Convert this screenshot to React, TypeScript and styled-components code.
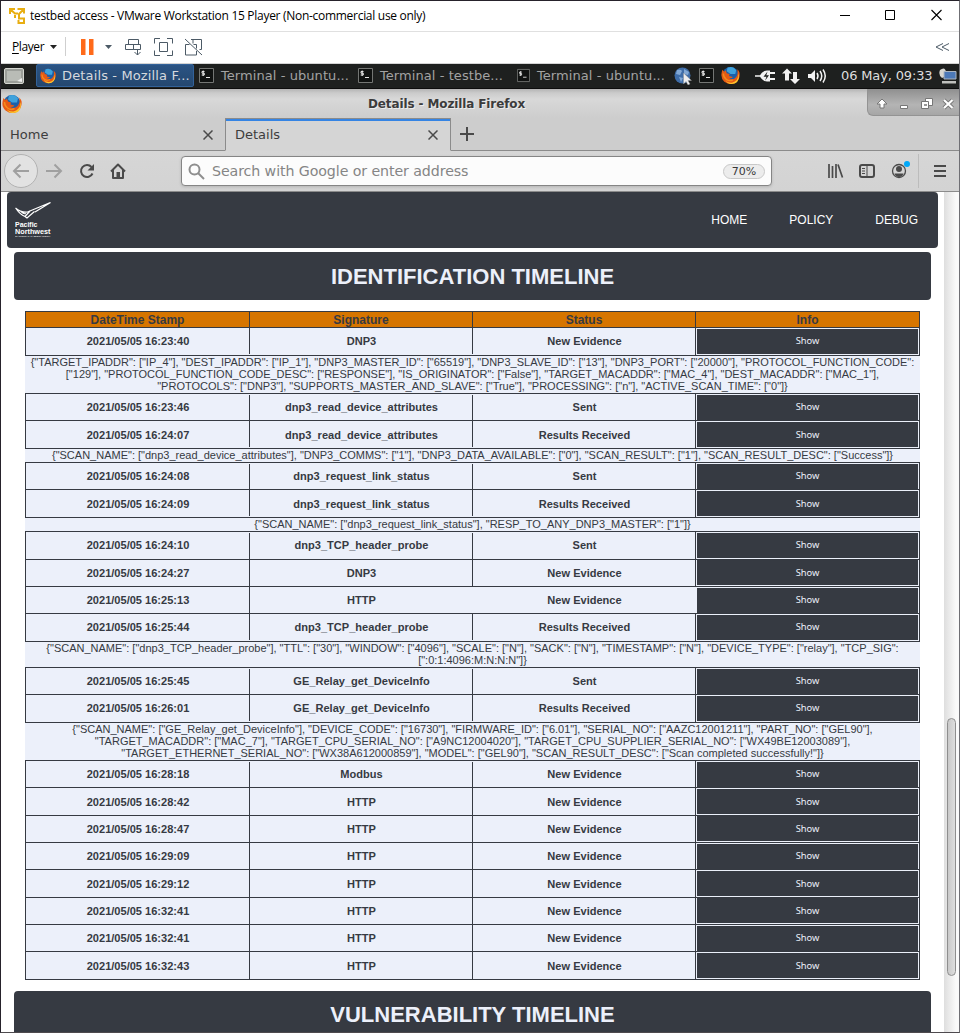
import React from 'react';
import styled, { createGlobalStyle, css } from 'styled-components';

const DARK = '#363a42';
const PALE = '#ecf0fa';

const Global = createGlobalStyle`
  * { box-sizing: border-box; }
  body { margin: 0; background: #fff; overflow: hidden; }
`;

const Frame = styled.div`
  width: 960px;
  height: 1033px;
  display: flex;
  flex-direction: column;
  overflow: hidden;
  border: 1px solid #26222b;
  border-right-color: #6f6f74;
  border-bottom-color: #4e4a4e;
  background: #fff;
`;

const HostTitle = styled.div`
  height: 30px;
  flex: none;
  display: flex;
  align-items: center;
  padding-left: 8px;
  gap: 5px;
  font: 12px/30px 'Open Sans', 'Noto Sans', sans-serif;
  color: #000;
`;
const HostTitleText = styled.span`
  flex: 1;
  white-space: nowrap;
  letter-spacing: -0.29px;
`;
const HostControls = styled.div`
  display: flex;
  margin-right: 15px;
  padding-bottom: 2px;
`;

const HostTools = styled.div`
  height: 33px;
  flex: none;
  display: flex;
  align-items: center;
  border-top: 1px solid #e0e0e0;
  border-bottom: 1px solid #d4d4d4;
  padding: 0 0 2px 11px;
  font: 12px 'Open Sans', 'Noto Sans', sans-serif;
  letter-spacing: -0.4px;
`;
const Mnemonic = styled.span`
  text-decoration: underline;
  text-underline-offset: 2px;
`;
const PlayerLabel = styled.span`
  width: 38px;
  white-space: nowrap;
`;
const Rule = styled.span`
  width: 1px;
  height: 19px;
  margin: 0 15px 0 8px;
  background: #cfcfcf;
`;
const Stretch = styled.span`
  flex: 1;
`;

const Panel = styled.div`
  height: 25px;
  flex: none;
  display: flex;
  align-items: center;
  background: #1e201f;
  border-bottom: 1px solid #0d0d0d;
  font: 13px 'DejaVu Sans', sans-serif;
  color: #a3a3a3;
  padding: 0 0 1px 3px;
`;
const Task = styled.div<{ $active?: boolean; $width: number }>`
  width: ${(p) => p.$width}px;
  height: 23px;
  flex: none;
  display: flex;
  align-items: center;
  gap: 7px;
  padding-left: 4px;
  white-space: nowrap;
  letter-spacing: 0.07px;
  ${(p) =>
    p.$active &&
    css`
      gap: 6px;
      padding-left: 3px;
      background: linear-gradient(#2b5484, #24476f);
      border: 1px solid #336299;
      border-radius: 2px;
      color: #d6d9de;
      letter-spacing: 0.14px;
    `}
`;
const Tray = styled.div`
  display: flex;
  align-items: center;
  flex: 1;
  gap: 7px;
  padding-left: 9px;
`;
const StatusGroup = styled.span`
  display: flex;
  margin-left: 8px;
`;
const Clock = styled.span`
  color: #dedede;
  margin-left: 5px;
  white-space: nowrap;
  letter-spacing: -0.14px;
`;

const FoxTitle = styled.div`
  height: 29px;
  flex: none;
  display: flex;
  background: linear-gradient(#b4b4b4 0, #cbcbcb 4px, #d8d8d8 10px, #cdcdcd 100%);
  font: bold 12px/31px 'DejaVu Sans', sans-serif;
  color: #3c3c3c;
`;
const FoxIconSlot = styled.div`
  width: 22px;
  padding: 5px 0 0 1px;
  line-height: 0;
`;
const FoxTitleText = styled.div`
  flex: 1;
  text-align: center;
  padding-left: 3px;
  letter-spacing: -0.12px;
  text-shadow: 1px 1px 0 #eee;
`;
const FoxControls = styled.div`
  width: 92px;
  height: 27px;
  background: linear-gradient(#8f8f8f, #b4b4b4 60%, #a6a6a6);
  border: 1px solid #939393;
  border-width: 0 0 1px 1px;
  border-bottom-left-radius: 6px;
`;

const Tabs = styled.div`
  height: 33px;
  flex: none;
  display: flex;
  background: #cdcdcd;
  font: 13px 'DejaVu Sans', sans-serif;
  color: #3d3d3d;
`;
const Tab = styled.div<{ $active?: boolean }>`
  width: ${(p) => (p.$active ? 226 : 224)}px;
  display: flex;
  align-items: center;
  justify-content: space-between;
  padding: 1px 12px 0 9px;
  border-bottom: 1px solid #8b8b8b;
  ${(p) =>
    p.$active &&
    css`
      background: linear-gradient(#3584e4 2px, #d5d5d5 2px);
      border: 1px solid #8b8b8b;
      border-bottom-color: #d5d5d5;
      padding-top: 0;
    `}
`;
const TabRest = styled.div`
  flex: 1;
  border-bottom: 1px solid #8b8b8b;
  padding: 9px 0 0 9px;
`;

const Nav = styled.div`
  height: 41px;
  flex: none;
  display: flex;
  align-items: center;
  background: linear-gradient(#d6d6d6, #d3d3d3);
  border-bottom: 1px solid #8b8b8b;
`;
const NavLeft = styled.div`
  width: 180px;
  line-height: 0;
`;
const UrlBar = styled.div`
  width: 591px;
  height: 30px;
  display: flex;
  align-items: center;
  border: 1px solid #858585;
  border-radius: 4px;
  background: #fcfcfc;
  box-shadow: 0 1px 3px rgba(0, 0, 0, 0.15);
  padding: 0 6px;
  font: 14.2px 'DejaVu Sans', sans-serif;
  color: #858585;
`;
const Placeholder = styled.span`
  flex: 1;
  padding: 0 0 1px 7px;
  letter-spacing: -0.09px;
`;
const ZoomBadge = styled.span`
  width: 42px;
  height: 15px;
  border: 1px solid #c8c8c8;
  border-radius: 8px;
  background: #ececec;
  color: #383838;
  font: 11px/13px 'DejaVu Sans', sans-serif;
  text-align: center;
`;

const View = styled.div`
  flex: 1;
  min-height: 0;
  display: flex;
  overflow: hidden;
  background: #fff;
`;
const Page = styled.div`
  width: 943px;
  font-family: 'Liberation Sans', Arial, sans-serif;
  color: ${DARK};
`;
const SiteHeader = styled.header`
  height: 56px;
  margin: 0 6px;
  display: flex;
  align-items: center;
  background: ${DARK};
  border-radius: 4px;
  color: #fff;
  padding: 0 20px 0 8px;
  font-size: 12px;
`;
const SiteLinks = styled.nav`
  flex: 1;
  display: flex;
  justify-content: flex-end;
  gap: 42px;
`;
const Banner = styled.h2<{ $line?: number }>`
  height: 48px;
  margin: 4px 13px 0;
  background: ${DARK};
  border-radius: 4px;
  color: #ecf0fa;
  font-size: 22px;
  line-height: ${(p) => p.$line ?? 49}px;
  text-align: center;
`;

const Table = styled.div`
  width: 895px;
  margin: 11px 0 11px 24px;
  border-bottom: 1px solid ${DARK};
`;
const COLUMNS = '224px 223px 223px 225px';
const HeadRow = styled.div`
  display: grid;
  grid-template-columns: ${COLUMNS};
  height: 16px;
  border-top: 1px solid ${DARK};
  background: #d67500;
  font: bold 12px/17px 'Liberation Sans', Arial, sans-serif;
  text-align: center;
`;
const HeadCell = styled.div`
  border-left: 1px solid ${DARK};
  &:last-child { border-right: 1px solid ${DARK}; }
`;
const Row = styled.div<{ $height: number }>`
  display: grid;
  grid-template-columns: ${COLUMNS};
  grid-template-rows: ${(p) => p.$height - 1}px;
  height: ${(p) => p.$height}px;
  border-top: 1px solid ${DARK};
  background: ${PALE};
  font-weight: bold;
  font-size: 11.05px;
  text-align: center;
`;
const Cell = styled.div<{ $open?: boolean; $from?: number; $to?: number; $low?: boolean }>`
  border-left: 1px solid ${(p) => (p.$open ? PALE : DARK)};
  margin: ${(p) => p.$from ?? 0}px 0 ${(p) => p.$to ?? 0}px;
  padding-left: 1px;
  line-height: ${(p) => (p.$low ? 29 : 27) - 2 * (p.$from ?? 0)}px;
`;
const InfoCell = styled.div<{ $open?: boolean; $flush?: boolean }>`
  border: 1px solid ${DARK};
  border-width: 0 1px;
  border-left-color: ${(p) => (p.$open ? PALE : DARK)};
  padding: ${(p) => (p.$flush ? 0 : 1)}px 1px 0;
`;
const ShowButton = styled.button<{ $low?: boolean }>`
  display: block;
  width: 100%;
  height: 25px;
  border: 0;
  padding: ${(p) => (p.$low ? '1px 0 0' : '0 0 1px')};
  background: ${DARK};
  color: #ecf0fa;
  font: 9.33px/22px 'Noto Sans', sans-serif;
`;
const Detail = styled.div`
  border-top: 1px solid ${DARK};
  background: ${PALE};
  padding-bottom: 1px;
  font-size: 11.01px;
  line-height: 12px;
  text-align: center;
  white-space: pre;
`;

const ScrollTrack = styled.div`
  width: 15px;
  background: linear-gradient(90deg, #dedede, #fafafa 80%);
  padding: 526px 0 0 3px;
`;
const ScrollThumb = styled.div`
  width: 9px;
  height: 258px;
  border: 1px solid #8e8e8e;
  border-radius: 5px;
  background: linear-gradient(90deg, #c9c9c9, #dedede);
`;

type Entry = {
  time: string;
  signature: string;
  status: string;
  height: number;
  low?: boolean;
  flush?: boolean;
  merged?: boolean;
  detail?: string[];
};

const entries: Entry[] = [
  { time: '2021/05/05 16:23:40', signature: 'DNP3', status: 'New Evidence', height: 28, detail: [
    '{"TARGET_IPADDR": ["IP_4"], "DEST_IPADDR": ["IP_1"], "DNP3_MASTER_ID": ["65519"], "DNP3_SLAVE_ID": ["13"], "DNP3_PORT": ["20000"], "PROTOCOL_FUNCTION_CODE":',
    '["129"], "PROTOCOL_FUNCTION_CODE_DESC": ["RESPONSE"], "IS_ORIGINATOR": ["False"], "TARGET_MACADDR": ["MAC_4"], "DEST_MACADDR": ["MAC_1"],',
    '"PROTOCOLS": ["DNP3"], "SUPPORTS_MASTER_AND_SLAVE": ["True"], "PROCESSING": ["n"], "ACTIVE_SCAN_TIME": ["0"]}',
  ] },
  { time: '2021/05/05 16:23:46', signature: 'dnp3_read_device_attributes', status: 'Sent', height: 27 },
  { time: '2021/05/05 16:24:07', signature: 'dnp3_read_device_attributes', status: 'Results Received', height: 28, low: true, detail: [
    '{"SCAN_NAME": ["dnp3_read_device_attributes"], "DNP3_COMMS": ["1"], "DNP3_DATA_AVAILABLE": ["0"], "SCAN_RESULT": ["1"], "SCAN_RESULT_DESC": ["Success"]}',
  ] },
  { time: '2021/05/05 16:24:08', signature: 'dnp3_request_link_status', status: 'Sent', height: 27 },
  { time: '2021/05/05 16:24:09', signature: 'dnp3_request_link_status', status: 'Results Received', height: 28, low: true, detail: [
    '{"SCAN_NAME": ["dnp3_request_link_status"], "RESP_TO_ANY_DNP3_MASTER": ["1"]}',
  ] },
  { time: '2021/05/05 16:24:10', signature: 'dnp3_TCP_header_probe', status: 'Sent', height: 28 },
  { time: '2021/05/05 16:24:27', signature: 'DNP3', status: 'New Evidence', height: 27, flush: true },
  { time: '2021/05/05 16:25:13', signature: 'HTTP', status: 'New Evidence', height: 27, merged: true },
  { time: '2021/05/05 16:25:44', signature: 'dnp3_TCP_header_probe', status: 'Results Received', height: 28, detail: [
    '{"SCAN_NAME": ["dnp3_TCP_header_probe"], "TTL": ["30"], "WINDOW": ["4096"], "SCALE": ["N"], "SACK": ["N"], "TIMESTAMP": ["N"], "DEVICE_TYPE": ["relay"], "TCP_SIG":',
    '[":0:1:4096:M:N:N:N"]}',
  ] },
  { time: '2021/05/05 16:25:45', signature: 'GE_Relay_get_DeviceInfo', status: 'Sent', height: 27 },
  { time: '2021/05/05 16:26:01', signature: 'GE_Relay_get_DeviceInfo', status: 'Results Received', height: 28, detail: [
    '{"SCAN_NAME": ["GE_Relay_get_DeviceInfo"], "DEVICE_CODE": ["16730"], "FIRMWARE_ID": ["6.01"], "SERIAL_NO": ["AAZC12001211"], "PART_NO": ["GEL90"],',
    '"TARGET_MACADDR": ["MAC_7"], "TARGET_CPU_SERIAL_NO": ["A9NC12004020"], "TARGET_CPU_SUPPLIER_SERIAL_NO": ["WX49BE12003089"],',
    '"TARGET_ETHERNET_SERIAL_NO": ["WX38A612000859"], "MODEL": ["GEL90"], "SCAN_RESULT_DESC": ["Scan completed successfully!"]}',
  ] },
  { time: '2021/05/05 16:28:18', signature: 'Modbus', status: 'New Evidence', height: 27 },
  { time: '2021/05/05 16:28:42', signature: 'HTTP', status: 'New Evidence', height: 28, low: true },
  { time: '2021/05/05 16:28:47', signature: 'HTTP', status: 'New Evidence', height: 27, flush: true },
  { time: '2021/05/05 16:29:09', signature: 'HTTP', status: 'New Evidence', height: 27 },
  { time: '2021/05/05 16:29:12', signature: 'HTTP', status: 'New Evidence', height: 28, low: true },
  { time: '2021/05/05 16:32:41', signature: 'HTTP', status: 'New Evidence', height: 27, flush: true },
  { time: '2021/05/05 16:32:41', signature: 'HTTP', status: 'New Evidence', height: 27 },
  { time: '2021/05/05 16:32:43', signature: 'HTTP', status: 'New Evidence', height: 28, low: true },
];

const VmLogo = () => (
  <svg width="16" height="16" viewBox="0 0 16 16" fill="none" stroke="#e8ae12" strokeWidth="2">
    <path d="M1 6V1h5M1.500 1.500L6.500 6M5 5.500h4M8.500 1H15v4.500M14.500 1.500L10 6M10 5.500v5h5v4.500H9.500V12M6 7v3" />
  </svg>
);

const HostWindowIcons = () => (
  <svg width="104" height="12" viewBox="0 0 104 12" fill="none" stroke="#000" strokeWidth="1">
    <path d="M0 6.500h10" />
    <path d="M45.500 1.500h9v9h-9z" />
    <path d="M91.500 1l10 10M101.500 1l-10 10" strokeWidth="1.100" />
  </svg>
);

const HostToolIcons = () => (
  <svg width="136" height="24" viewBox="0 0 136 24" fill="none" stroke="#4c5a66" strokeWidth="1">
    <path d="M0 4h4.500v16H0zM8 4h4.500v16H8z" fill="#ff6a1a" stroke="none" />
    <path d="M24 10h7l-3.500 4z" fill="#4c5a66" stroke="none" />
    <path d="M47.500 4.500h10v5h-10zM44.500 9.500h8v5h-8zM52.500 9.500h7v5h-7zM56.500 14v6M53.500 17l3 3 3-3" />
    <path d="M73.500 8.500V3.500H79M86 3.500h5.500V8.500M91.500 15.500v5H86M79 20.500h-5.500V15.500M78.500 7.500h8v9h-8z" />
    <path d="M104 4l17 16M110 4.500h10.500V14.500h-2M112 4.500v4M104.500 9.500v10.500h11v-4M104.500 9.500h4M112.500 9.500h3v4" />
  </svg>
);

const DesktopIcon = () => (
  <svg width="20" height="16" viewBox="0 0 20 16">
    <rect x=".5" y=".5" width="19" height="15" rx="1.500" fill="#9b9e99" stroke="#d4d6d0" />
    <path d="M3 3h14v8l-4 2H3z" fill="#b9bcb6" />
    <path d="M13 13l5-3v4z" fill="#eee" />
  </svg>
);

const Firefox = ({ size }: { size: number }) => (
  <svg width={size} height={size} viewBox="0 0 20 20">
    <circle cx="10" cy="9.500" r="8.500" fill="#1c5fa8" />
    <path d="M7 1.500q6-2 9 3l-1 4-5 0-4-3z" fill="#3fa2dc" />
    <path d="M1.500 4q-3 8 2 12.500 6 4.500 12 1 5-4 4-10.500Q19 5 17 3.500q1.500 5-1 8-3 4-7.500 1.500 3 .2 4-1.500L8.500 10.500l.5-2-3-1L5 4.500 3.500 6z" fill="#e65a14" />
    <path d="M18.500 8q0 8-7 9.500-5 .5-7-3 2 4.500 6.500 4.500 8 0 8-9z" fill="#fdc52c" />
    <path d="M2.500 8q0 4 3 6 3.500 2.500 7 .5" fill="none" stroke="#f58b1d" strokeWidth="1.500" />
  </svg>
);

const TerminalIcon = () => (
  <svg width="15" height="15" viewBox="0 0 15 15">
    <path d="M.5.5h14v14H.5z" fill="#101211" stroke="#747674" />
    <path d="M5.500 3.500H3v1.700h2.300V7H2.700M4.200 2.500V8M7 9.500h4" fill="none" stroke="#e4e4e4" />
  </svg>
);

const GlobeIcon = () => (
  <svg width="18" height="18" viewBox="0 0 18 18">
    <circle cx="8.500" cy="8.500" r="8" fill="#3f6da8" />
    <path d="M3 3q4-1 5 1l-2 4-4-1zM10 2l5 3-1 3-4-1zM5 10l4 1-2 4z" fill="#82a8d4" />
    <path d="M9.500 6v11l2.500-2.500 2 3.500 2-1-2-3.500h3.500z" fill="#eee" stroke="#888" strokeWidth=".4" />
  </svg>
);

const StatusIcons = () => (
  <svg width="74" height="18" viewBox="0 0 74 18" fill="#f2f2f2">
    <path d="M0 8.200h5Q8 3.500 12 3.500h3v11h-3q-4 0-7-4.700H0zM15 5h5v2h-5zM15 11h5v2h-5z" />
    <path d="M12.500 4.500l-4 5.200h3l-1.500 4 4-5.400h-2.700z" fill="#1e201f" />
    <path d="M32 1.500L27 6.500h3v7h4V6.500h3zM40 17l5-5h-3V5h-4v7h-3z" />
    <path d="M53 7h3l4-4v12l-4-4h-3z" />
    <path d="M62 6q2 3 0 6M65 4q3.500 5 0 10M68 2.500q4.500 6.500 0 13" fill="none" stroke="#f2f2f2" strokeWidth="1.500" />
  </svg>
);

const NetworkIcon = () => (
  <svg width="18" height="18" viewBox="0 0 18 18">
    <path d="M1 3q5-4 6 2 0 5-4 6-4-3-2-8z" fill="#d7d7d2" />
    <path d="M5 4.500h12v7.500H5z" fill="#4c79b8" stroke="#aab4c0" />
    <path d="M3 14h14v2.500H3z" fill="#bfc0bd" />
  </svg>
);

const FoxWindowIcons = () => (
  <svg width="90" height="26" viewBox="0 0 90 26" fill="#fff" stroke="#777" strokeWidth="1">
    <path d="M14 10l5 5h-3v4h-4v-4H9z" />
    <path d="M32.500 16.500h7v3h-7z" />
    <path d="M57.500 9.500h7v7h-7z" />
    <path d="M53.500 12.500h7v7h-7z" />
    <path d="M56 15h3v2h-3z" fill="#999" stroke="none" />
    <path d="M76 11l8.500 8M84.500 11L76 19" stroke="#777" strokeWidth="4" />
    <path d="M76 11l8.500 8M84.500 11L76 19" stroke="#fff" strokeWidth="2.200" />
  </svg>
);

const CloseIcon = () => (
  <svg width="10" height="10" viewBox="0 0 10 10" stroke="#4a4a4a" strokeWidth="1.500">
    <path d="M.5.5l9 9M9.500.5l-9 9" />
  </svg>
);

const PlusIcon = () => (
  <svg width="14" height="14" viewBox="0 0 14 14" stroke="#4a4a4a" strokeWidth="2">
    <path d="M7 0v14M0 7h14" />
  </svg>
);

const NavIcons = () => (
  <svg width="140" height="36" viewBox="0 0 140 36" fill="none" strokeWidth="2">
    <circle cx="20" cy="18" r="16.500" fill="#e2e2e2" stroke="#b2b2b2" strokeWidth="1" />
    <path d="M28 18H13M19.500 11.500L13 18l6.500 6.500" stroke="#a0a0a0" />
    <path d="M45 18h15M53.500 11.500L60 18l-6.500 6.500" stroke="#a0a0a0" />
    <path d="M90.500 14a6 6 0 1 0 1 6.500" stroke="#4a4a4a" />
    <path d="M93 11v6.500h-6.500z" fill="#4a4a4a" />
    <path d="M110 18.500l7-7 7 7M112 17v8h10v-8" stroke="#4a4a4a" strokeLinejoin="round" />
    <path d="M115.500 19h3.500v6h-3.500z" fill="#4a4a4a" />
  </svg>
);

const SearchIcon = () => (
  <svg width="17" height="17" viewBox="0 0 17 17" fill="none" stroke="#8e8e8e" strokeWidth="2">
    <circle cx="6.500" cy="6.500" r="5" />
    <path d="M10 10l6 6" />
  </svg>
);

const ToolIcons = () => (
  <svg width="124" height="36" viewBox="0 0 124 36" fill="none" stroke="#4a4a4a" strokeWidth="2">
    <path d="M2 11v14M5.500 13v12M9 11v14M11 11.500l4.500 13" strokeWidth="1.700" />
    <rect x="33" y="12" width="14" height="12" rx="2" />
    <path d="M40 12v12M35 15.500h3M35 18h3M35 20.500h3" strokeWidth="1" />
    <circle cx="72" cy="18" r="6.500" strokeWidth="1.300" />
    <circle cx="72" cy="16" r="3" fill="#4a4a4a" stroke="none" />
    <path d="M67.500 20.500h9q-1 3.500-4.500 3.500t-4.500-3.500z" fill="#4a4a4a" stroke="none" />
    <circle cx="80" cy="11" r="3" fill="#00a8f8" stroke="none" />
    <path d="M91.500 1v34" stroke="#bcbcbc" strokeWidth="1" />
    <path d="M107 13h12M107 18h12M107 23h12" />
  </svg>
);

const LogoBox = styled.div`
  width: 38px;
  line-height: 0;
`;
const LabLogo = () => (
  <svg width="37" height="37" viewBox="0 0 37 37">
    <path d="M.5 6q5 4.500 12 4L35.500.5 20 10M1 6.500q4 6 9 8L12 16l7.500-6.500M6 9.500q3 3 5 2M10 14.500l5-5.500" fill="none" stroke="#fff" strokeWidth="1.200" />
    <g fill="#fff" fontFamily="Liberation Sans, sans-serif" fontWeight="700">
      <text x="0" y="24.500" fontSize="6.800" textLength="22.500" lengthAdjust="spacingAndGlyphs">Pacific</text>
      <text x="0" y="31.500" fontSize="6.800" textLength="35.500" lengthAdjust="spacingAndGlyphs">Northwest</text>
      <text x="0" y="35" fontSize="2.500" fontWeight="400" textLength="35.500" lengthAdjust="spacingAndGlyphs">NATIONAL LABORATORY</text>
    </g>
  </svg>
);

export default function App() {
  return (
    <Frame>
      <Global />
      <HostTitle>
        <VmLogo />
        <HostTitleText>testbed access - VMware Workstation 15 Player (Non-commercial use only)</HostTitleText>
        <HostControls><HostWindowIcons /></HostControls>
      </HostTitle>
      <HostTools>
        <PlayerLabel><Mnemonic>P</Mnemonic>layer</PlayerLabel>
        <svg width="7" height="4" viewBox="0 0 7 4"><path d="M0 0h7L3.500 4z" fill="#222" /></svg>
        <Rule />
        <HostToolIcons />
        <Stretch />
        <svg width="24" height="10" viewBox="0 0 24 10" fill="none" stroke="#4c5a66"><path d="M8 1.500L1 5l7 3.500M14 1.500L7 5l7 3.500" /></svg>
      </HostTools>
      <Panel>
        <DesktopIcon />
        <svg width="12" height="10" />
        <Task $active $width={158}><Firefox size={16} />Details - Mozilla F...</Task>
        <svg width="1" height="1" />
        <Task $width={159}><TerminalIcon />Terminal - ubuntu...</Task>
        <Task $width={159}><TerminalIcon />Terminal - testbe...</Task>
        <Task $width={152}><TerminalIcon />Terminal - ubuntu...</Task>
        <Tray>
          <GlobeIcon />
          <TerminalIcon />
          <Firefox size={19} />
          <StatusGroup><StatusIcons /></StatusGroup>
          <Clock>06 May, 09:33</Clock>
          <NetworkIcon />
        </Tray>
      </Panel>
      <FoxTitle>
        <FoxIconSlot><Firefox size={20} /></FoxIconSlot>
        <FoxTitleText>Details - Mozilla Firefox</FoxTitleText>
        <FoxControls><FoxWindowIcons /></FoxControls>
      </FoxTitle>
      <Tabs>
        <Tab>Home<CloseIcon /></Tab>
        <Tab $active>Details<CloseIcon /></Tab>
        <TabRest><PlusIcon /></TabRest>
      </Tabs>
      <Nav>
        <NavLeft><NavIcons /></NavLeft>
        <UrlBar>
          <SearchIcon />
          <Placeholder>Search with Google or enter address</Placeholder>
          <ZoomBadge>70%</ZoomBadge>
        </UrlBar>
        <Stretch />
        <ToolIcons />
        <svg width="8" height="1" />
      </Nav>
      <View>
        <Page>
          <SiteHeader>
            <LogoBox><LabLogo /></LogoBox>
            <SiteLinks><span>HOME</span><span>POLICY</span><span>DEBUG</span></SiteLinks>
          </SiteHeader>
          <Banner>IDENTIFICATION TIMELINE</Banner>
          <Table>
            <HeadRow>
              <HeadCell>DateTime Stamp</HeadCell>
              <HeadCell>Signature</HeadCell>
              <HeadCell>Status</HeadCell>
              <HeadCell>Info</HeadCell>
            </HeadRow>
            {entries.map((e, i) => (
              <React.Fragment key={i}>
                <Row $height={e.height}>
                  <Cell $low={e.low}>{e.time}</Cell>
                  <Cell $low={e.low} $from={entries[i - 1]?.detail ? 1 : 0} $to={e.detail ? 1 : 0}>{e.signature}</Cell>
                  <Cell $low={e.low} $open={e.merged} $from={entries[i - 1]?.detail ? 1 : 0} $to={e.detail ? 1 : 0}>{e.status}</Cell>
                  <InfoCell $open={e.merged} $flush={e.flush}><ShowButton $low={e.low || e.flush}>Show</ShowButton></InfoCell>
                </Row>
                {e.detail && <Detail>{e.detail.join('\n')}</Detail>}
              </React.Fragment>
            ))}
          </Table>
          <Banner $line={47}>VULNERABILITY TIMELINE</Banner>
        </Page>
        <ScrollTrack><ScrollThumb /></ScrollTrack>
      </View>
    </Frame>
  );
}
